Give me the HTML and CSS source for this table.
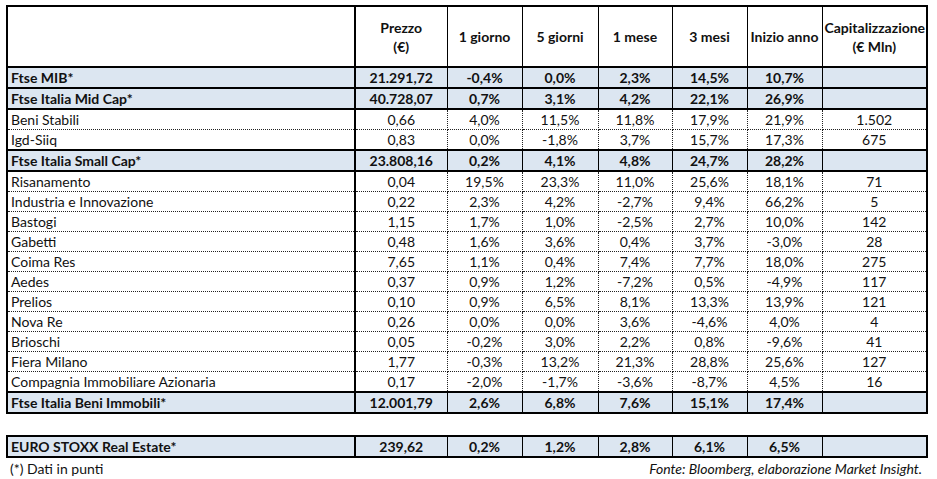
FILE: index.html
```html
<!DOCTYPE html>
<html lang="it">
<head>
<meta charset="utf-8">
<title>Indici e titoli immobiliari</title>
<link rel="stylesheet" href="styles.css">
</head>
<body>
<div class="page">
  <table class="tbl">
    <colgroup>
      <col class="c-name"><col class="c-price"><col class="c-a"><col class="c-b"><col class="c-c"><col class="c-d"><col class="c-e"><col class="c-cap">
    </colgroup>
    <thead>
      <tr>
        <th class="name"></th>
        <th>Prezzo<br>(€)</th>
        <th>1 giorno</th>
        <th>5 giorni</th>
        <th>1 mese</th>
        <th>3 mesi</th>
        <th>Inizio anno</th>
        <th>Capitalizzazione<br>(€ Mln)</th>
      </tr>
    </thead>
    <tbody>
      <tr class="idx"><td class="name">Ftse MIB*</td><td>21.291,72</td><td>-0,4%</td><td>0,0%</td><td>2,3%</td><td>14,5%</td><td>10,7%</td><td></td></tr>
      <tr class="idx"><td class="name">Ftse Italia Mid Cap*</td><td>40.728,07</td><td>0,7%</td><td>3,1%</td><td>4,2%</td><td>22,1%</td><td>26,9%</td><td></td></tr>
      <tr><td class="name">Beni Stabili</td><td>0,66</td><td>4,0%</td><td>11,5%</td><td>11,8%</td><td>17,9%</td><td>21,9%</td><td>1.502</td></tr>
      <tr><td class="name">Igd-Siiq</td><td>0,83</td><td>0,0%</td><td>-1,8%</td><td>3,7%</td><td>15,7%</td><td>17,3%</td><td>675</td></tr>
      <tr class="idx"><td class="name">Ftse Italia Small Cap*</td><td>23.808,16</td><td>0,2%</td><td>4,1%</td><td>4,8%</td><td>24,7%</td><td>28,2%</td><td></td></tr>
      <tr><td class="name">Risanamento</td><td>0,04</td><td>19,5%</td><td>23,3%</td><td>11,0%</td><td>25,6%</td><td>18,1%</td><td>71</td></tr>
      <tr><td class="name">Industria e Innovazione</td><td>0,22</td><td>2,3%</td><td>4,2%</td><td>-2,7%</td><td>9,4%</td><td>66,2%</td><td>5</td></tr>
      <tr><td class="name">Bastogi</td><td>1,15</td><td>1,7%</td><td>1,0%</td><td>-2,5%</td><td>2,7%</td><td>10,0%</td><td>142</td></tr>
      <tr><td class="name">Gabetti</td><td>0,48</td><td>1,6%</td><td>3,6%</td><td>0,4%</td><td>3,7%</td><td>-3,0%</td><td>28</td></tr>
      <tr><td class="name">Coima Res</td><td>7,65</td><td>1,1%</td><td>0,4%</td><td>7,4%</td><td>7,7%</td><td>18,0%</td><td>275</td></tr>
      <tr><td class="name">Aedes</td><td>0,37</td><td>0,9%</td><td>1,2%</td><td>-7,2%</td><td>0,5%</td><td>-4,9%</td><td>117</td></tr>
      <tr><td class="name">Prelios</td><td>0,10</td><td>0,9%</td><td>6,5%</td><td>8,1%</td><td>13,3%</td><td>13,9%</td><td>121</td></tr>
      <tr><td class="name">Nova Re</td><td>0,26</td><td>0,0%</td><td>0,0%</td><td>3,6%</td><td>-4,6%</td><td>4,0%</td><td>4</td></tr>
      <tr><td class="name">Brioschi</td><td>0,05</td><td>-0,2%</td><td>3,0%</td><td>2,2%</td><td>0,8%</td><td>-9,6%</td><td>41</td></tr>
      <tr><td class="name">Fiera Milano</td><td>1,77</td><td>-0,3%</td><td>13,2%</td><td>21,3%</td><td>28,8%</td><td>25,6%</td><td>127</td></tr>
      <tr><td class="name">Compagnia Immobiliare Azionaria</td><td>0,17</td><td>-2,0%</td><td>-1,7%</td><td>-3,6%</td><td>-8,7%</td><td>4,5%</td><td>16</td></tr>
      <tr class="idx"><td class="name">Ftse Italia Beni Immobili*</td><td>12.001,79</td><td>2,6%</td><td>6,8%</td><td>7,6%</td><td>15,1%</td><td>17,4%</td><td></td></tr>
    </tbody>
  </table>

  <table class="tbl tbl-euro">
    <colgroup>
      <col class="c-name"><col class="c-price"><col class="c-a"><col class="c-b"><col class="c-c"><col class="c-d"><col class="c-e"><col class="c-cap">
    </colgroup>
    <tbody>
      <tr class="idx"><td class="name">EURO STOXX Real Estate*</td><td>239,62</td><td>0,2%</td><td>1,2%</td><td>2,8%</td><td>6,1%</td><td>6,5%</td><td></td></tr>
    </tbody>
  </table>

  <div class="foot">
    <span class="note">(*) Dati in punti</span>
    <span class="src">Fonte: Bloomberg, elaborazione Market Insight.</span>
  </div>
</div>
</body>
</html>
```
FILE: styles.css
```css
html, body {
  margin: 0;
  padding: 0;
  background: #ffffff;
}

.page {
  padding: 5px 0 0 6px;
  width: 921px;
  font-family: Lato, "Open Sans", sans-serif;
  font-size: 14px;
  color: #111111;
}

.tbl {
  border-collapse: collapse;
  table-layout: fixed;
  width: 920px;
  border: 2px solid #000;
}

.c-name { width: 348px; }
.c-price { width: 92px; }
.c-a { width: 75px; }
.c-b { width: 76px; }
.c-c { width: 74px; }
.c-d { width: 75px; }
.c-e { width: 75px; }
.c-cap { width: 105px; }

.tbl td,
.tbl th {
  padding: 0 2px;
  height: 19px;
  line-height: 17px;
  text-align: center;
  white-space: nowrap;
  border: 1px dotted #222;
  font-weight: normal;
}

.tbl td.name {
  text-align: left;
  padding-left: 3px;
  border-right: 2px solid #000;
}

.tbl thead th {
  height: 59px;
  line-height: 19px;
  font-weight: bold;
  border: 1px solid #000;
  border-bottom: 2px solid #000;
}

.tbl thead th.name {
  border-right: 2px solid #000;
}

.tbl tr.idx td {
  background: #dce6f1;
  font-weight: bold;
  border-top: 2px solid #000;
  border-bottom: 2px solid #000;
  border-left: 1px solid #000;
  border-right: 1px solid #000;
}

.tbl tr.idx td.name {
  border-right: 2px solid #000;
}

.tbl-euro {
  margin-top: 21px;
}

.foot {
  display: flex;
  justify-content: space-between;
  padding: 2px 5px 0 4px;
  line-height: 18px;
}

.src {
  font-style: italic;
}
```
